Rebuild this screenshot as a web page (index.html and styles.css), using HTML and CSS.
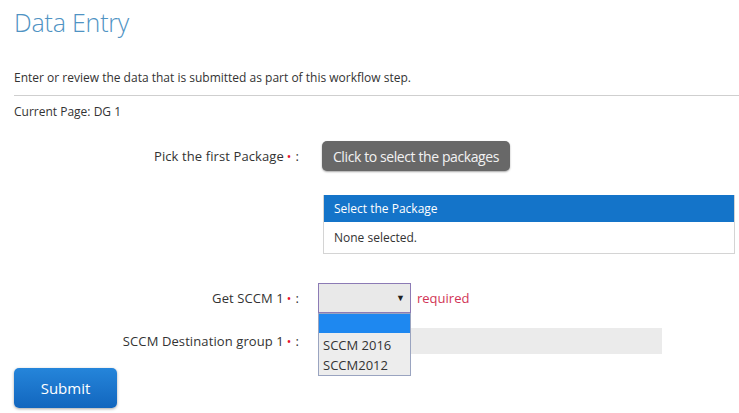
FILE: index.html
```html
<!DOCTYPE html>
<html>
<head>
<meta charset="utf-8">
<link rel="stylesheet" href="styles.css">
</head>
<body>
<div class="page">
  <h1 class="title">Data Entry</h1>
  <p class="intro">Enter or review the data that is submitted as part of this workflow step.</p>
  <div class="rule"></div>
  <p class="current">Current Page: DG 1</p>
  <div class="form">
    <div class="label row1">Pick the first Package<span class="req">•</span> :</div>
    <div class="ctrl row1"><button class="pick">Click to select the packages</button></div>

    <div class="label row2"></div>
    <div class="ctrl row2">
      <div class="pkgbox">
        <div class="pkghead">Select the Package</div>
        <div class="pkgbody">None selected.</div>
      </div>
    </div>

    <div class="label row3">Get SCCM 1<span class="req">•</span> :</div>
    <div class="ctrl row3">
      <div class="selwrap">
        <div class="select"><span class="arrow">▼</span></div>
        <div class="dropdown">
          <div class="opt hl"></div>
          <div class="opt">SCCM 2016</div>
          <div class="opt">SCCM2012</div>
        </div>
      </div>
      <span class="required">required</span>
    </div>

    <div class="label row4">SCCM Destination group 1<span class="req">•</span> :</div>
    <div class="ctrl row4"><div class="textin"></div></div>
  </div>
  <button class="submit">Submit</button>
</div>
</body>
</html>
```
FILE: styles.css
```css
html, body { margin: 0; padding: 0; background: #fff; }
body { font-family: "Open Sans", "Noto Sans", sans-serif; color: #333; font-size: 12px; }
.page { padding: 0 0 0 14px; width: 725px; overflow: hidden; height: 413px; position: relative; }
.title { margin: 0; padding-top: 5px; font-weight: 300; font-size: 25px; line-height: 34px; color: #4f93c3; letter-spacing: -0.2px; }
.intro { margin: 31px 0 0; line-height: 16px; }
.rule { height: 1px; background: #cfcfcf; margin-top: 9px; }
.current { margin: 8px 0 0; line-height: 16px; }
.form { display: grid; grid-template-columns: 285px 420px; column-gap: 19px; margin-top: 21px; font-size: 13px; }
.label { text-align: right; display: flex; align-items: center; justify-content: flex-end; letter-spacing: 0.1px; }
.req { color: #e8102c; font-size: 12px; margin: 0 4px 0 3px; }
.row1 { height: 30px; }
.ctrl { display: flex; align-items: center; }
.pick { margin-left: 4px; height: 30px; width: 188px; border: none; border-radius: 5px; background: #686868; color: #f2f2f2; font-family: "Open Sans", sans-serif; font-size: 14px; padding: 0; box-shadow: 0 1px 2px rgba(0,0,0,0.35); letter-spacing: -0.4px; }
.row2 { margin-top: 24px; }
.pkgbox { margin-left: 5px; width: 410px; border: 1px solid #d4d4d4; border-top: none; }
.pkghead { background: #1474c9; color: #fff; height: 27px; line-height: 27px; padding-left: 10px; font-size: 12px; }
.pkgbody { height: 31px; line-height: 31px; padding-left: 10px; color: #333; font-size: 12px; }
.row3 { margin-top: 29px; height: 30px; }
.selwrap { position: relative; }
.select { width: 91px; height: 28px; border: 1px solid #8c7bb5; background: #e9e9e9; position: relative; }
.arrow { position: absolute; right: 5px; top: 7px; font-size: 9px; color: #222; }
.dropdown { position: absolute; left: 0; top: 30px; width: 91px; border: 1px solid #9aa4c0; background: #ededed; z-index: 2; }
.opt { height: 20px; line-height: 20px; padding-left: 4px; font-size: 13px; color: #333; }
.opt.hl { background: #1e88f0; height: 19px; }
.opt:nth-child(2) { margin-top: 2px; }
.required { color: #d13456; margin-left: 6px; font-size: 13px; }
.row4 { margin-top: 14px; height: 28px; }
.textin { width: 344px; height: 26px; background: #ebebeb; }
.submit { margin-top: 13px; width: 103px; height: 40px; border: none; border-radius: 5px; background: linear-gradient(#2585da, #1266be); color: #fff; font-family: "Open Sans", sans-serif; font-size: 15px; box-shadow: 0 1px 3px rgba(0,0,0,0.35); padding: 0; }
```
